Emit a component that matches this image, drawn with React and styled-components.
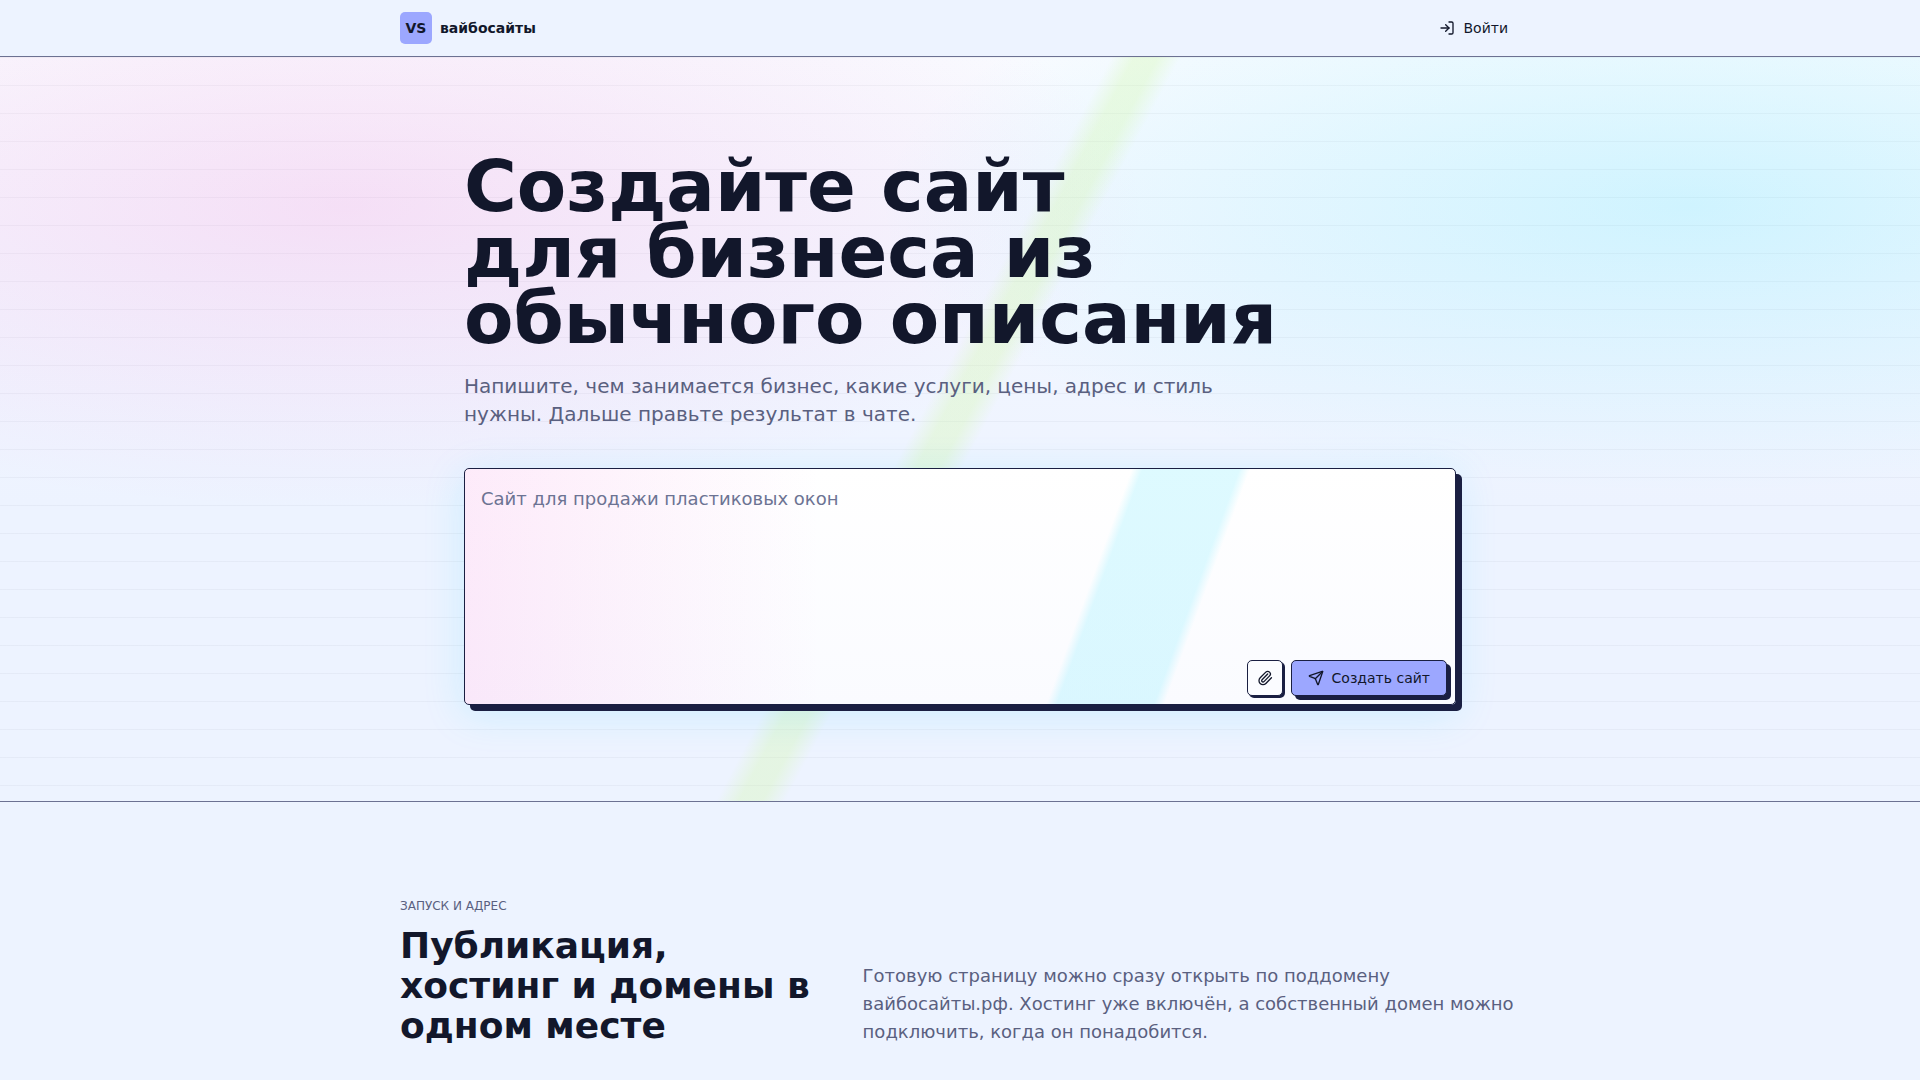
import styled, { createGlobalStyle } from "styled-components";
import { LogIn, Paperclip, Send } from "lucide-react";

/* ------------------ STYLES ------------------ */

const GlobalStyle = createGlobalStyle`
  *, *::before, *::after {
    box-sizing: border-box;
  }

  body {
    margin: 0;
    background: #edf3ff;
    color: #12172b;
    font-family: "DejaVu Sans", sans-serif;
  }

  h1, h2, p {
    margin: 0;
  }
`;

const Container = styled.div`
  width: 100%;
  max-width: ${({ $width }) => $width}px;
  margin: 0 auto;
`;

const Header = styled.header`
  padding: 0 16px;
  border-bottom: 1px solid #6c7192;
`;

const HeaderRow = styled(Container)`
  display: flex;
  align-items: center;
  justify-content: space-between;
  height: 56px;
`;

const Brand = styled.a`
  display: flex;
  align-items: center;
  gap: 8px;
  color: inherit;
  font-size: 14px;
  font-weight: 700;
  text-decoration: none;
`;

const BrandMark = styled.span`
  display: grid;
  place-items: center;
  width: 32px;
  height: 32px;
  border-radius: 5px;
  background: #9ca7ff;
`;

const LoginLink = styled.a`
  display: flex;
  align-items: center;
  gap: 8px;
  padding: 8px 12px;
  color: inherit;
  font-size: 14px;
  text-decoration: none;
`;

const Hero = styled.section`
  padding: 96px 16px;
  border-bottom: 1px solid #6c7192;
  background:
    linear-gradient(118deg, transparent 48%, rgba(205, 250, 150, 0.27) 49%, rgba(205, 250, 150, 0.27) 50%, transparent 51%),
    radial-gradient(ellipse at 18% 20%, rgba(244, 114, 208, 0.19), transparent 36%),
    radial-gradient(ellipse at 88% 20%, rgba(34, 221, 255, 0.18), transparent 34%),
    repeating-linear-gradient(180deg, rgba(18, 23, 43, 0.04) 0 1px, transparent 1px 28px),
    linear-gradient(180deg, #f9fbff, #edf3ff 60%);
`;

const Title = styled.h1`
  max-width: 832px;
  font-size: 72px;
  font-weight: 700;
  line-height: 0.92;
`;

const Lead = styled.p`
  max-width: 768px;
  margin-top: 20px;
  color: #5a6080;
  font-size: 20px;
  line-height: 28px;
`;

const PromptForm = styled.form`
  display: flex;
  flex-direction: column;
  margin-top: 40px;
  border: 1px solid #1a1f42;
  border-radius: 5px;
  background:
    linear-gradient(90deg, rgba(244, 114, 218, 0.14), transparent 36%),
    linear-gradient(110deg, transparent 62%, rgba(103, 232, 255, 0.22) 63%, rgba(103, 232, 255, 0.22) 72%, transparent 73%),
    linear-gradient(180deg, #ffffff, #fafbff);
  box-shadow: 6px 6px 0 #1a1f42, 0 8px 40px rgba(34, 211, 255, 0.17);
`;

const PromptInput = styled.textarea`
  display: block;
  width: 100%;
  height: 183px;
  padding: 16px;
  border: 0;
  outline: 0;
  background: transparent;
  color: inherit;
  font: inherit;
  font-size: 18px;
  line-height: 28px;
  resize: none;

  &::placeholder {
    color: #6c7393;
    opacity: 1;
  }
`;

const Actions = styled.div`
  display: flex;
  justify-content: flex-end;
  gap: 8px;
  padding: 8px;
`;

const Button = styled.button`
  display: flex;
  align-items: center;
  justify-content: center;
  gap: 8px;
  height: 36px;
  padding: 0 16px;
  border: 1px solid #1a1f42;
  border-radius: 5px;
  background: #9ca7ff;
  box-shadow: 4px 4px 0 #1a1f42;
  color: #12172b;
  font: inherit;
  font-size: 14px;
`;

const IconButton = styled(Button)`
  width: 36px;
  padding: 0;
  background: #fbfcff;
  box-shadow: 2px 2px 0 #1a1f42;
`;

const Launch = styled.section`
  padding: 96px 16px;
`;

const LaunchGrid = styled(Container)`
  display: grid;
  grid-template-columns: 9fr 14fr;
  align-items: end;
  gap: 40px;
`;

const Eyebrow = styled.p`
  color: #5a6080;
  font-size: 12px;
  line-height: 16px;
  text-transform: uppercase;
`;

const SectionTitle = styled.h2`
  margin-top: 12px;
  font-size: 36px;
  font-weight: 700;
  line-height: 40px;
`;

const SectionText = styled.p`
  color: #5a6080;
  font-size: 18px;
  line-height: 28px;
`;

/* ------------------ COMPONENTS ------------------ */

function SiteHeader() {
  return (
    <Header>
      <HeaderRow $width={1120}>
        <Brand href="#">
          <BrandMark>VS</BrandMark>
          вайбосайты
        </Brand>
        <LoginLink href="#login">
          <LogIn size={16} />
          Войти
        </LoginLink>
      </HeaderRow>
    </Header>
  );
}

function Prompt() {
  return (
    <PromptForm onSubmit={(e) => e.preventDefault()}>
      <PromptInput
        aria-label="Описание сайта"
        placeholder="Сайт для продажи пластиковых окон"
      />
      <Actions>
        <IconButton type="button" aria-label="Прикрепить файл">
          <Paperclip size={16} />
        </IconButton>
        <Button type="submit">
          <Send size={16} />
          Создать сайт
        </Button>
      </Actions>
    </PromptForm>
  );
}

export default function App() {
  return (
    <>
      <GlobalStyle />
      <SiteHeader />
      <main>
        <Hero>
          <Container $width={992}>
            <Title>
              Создайте сайт
              <br />
              для бизнеса из
              <br />
              обычного описания
            </Title>
            <Lead>
              Напишите, чем занимается бизнес, какие услуги, цены, адрес и стиль
              нужны. Дальше правьте результат в чате.
            </Lead>
            <Prompt />
          </Container>
        </Hero>
        <Launch id="launch">
          <LaunchGrid $width={1120}>
            <div>
              <Eyebrow>Запуск и адрес</Eyebrow>
              <SectionTitle>Публикация, хостинг и домены в одном месте</SectionTitle>
            </div>
            <SectionText>
              Готовую страницу можно сразу открыть по поддомену вайбосайты.рф.
              Хостинг уже включён, а собственный домен можно подключить, когда он
              понадобится.
            </SectionText>
          </LaunchGrid>
        </Launch>
      </main>
    </>
  );
}
